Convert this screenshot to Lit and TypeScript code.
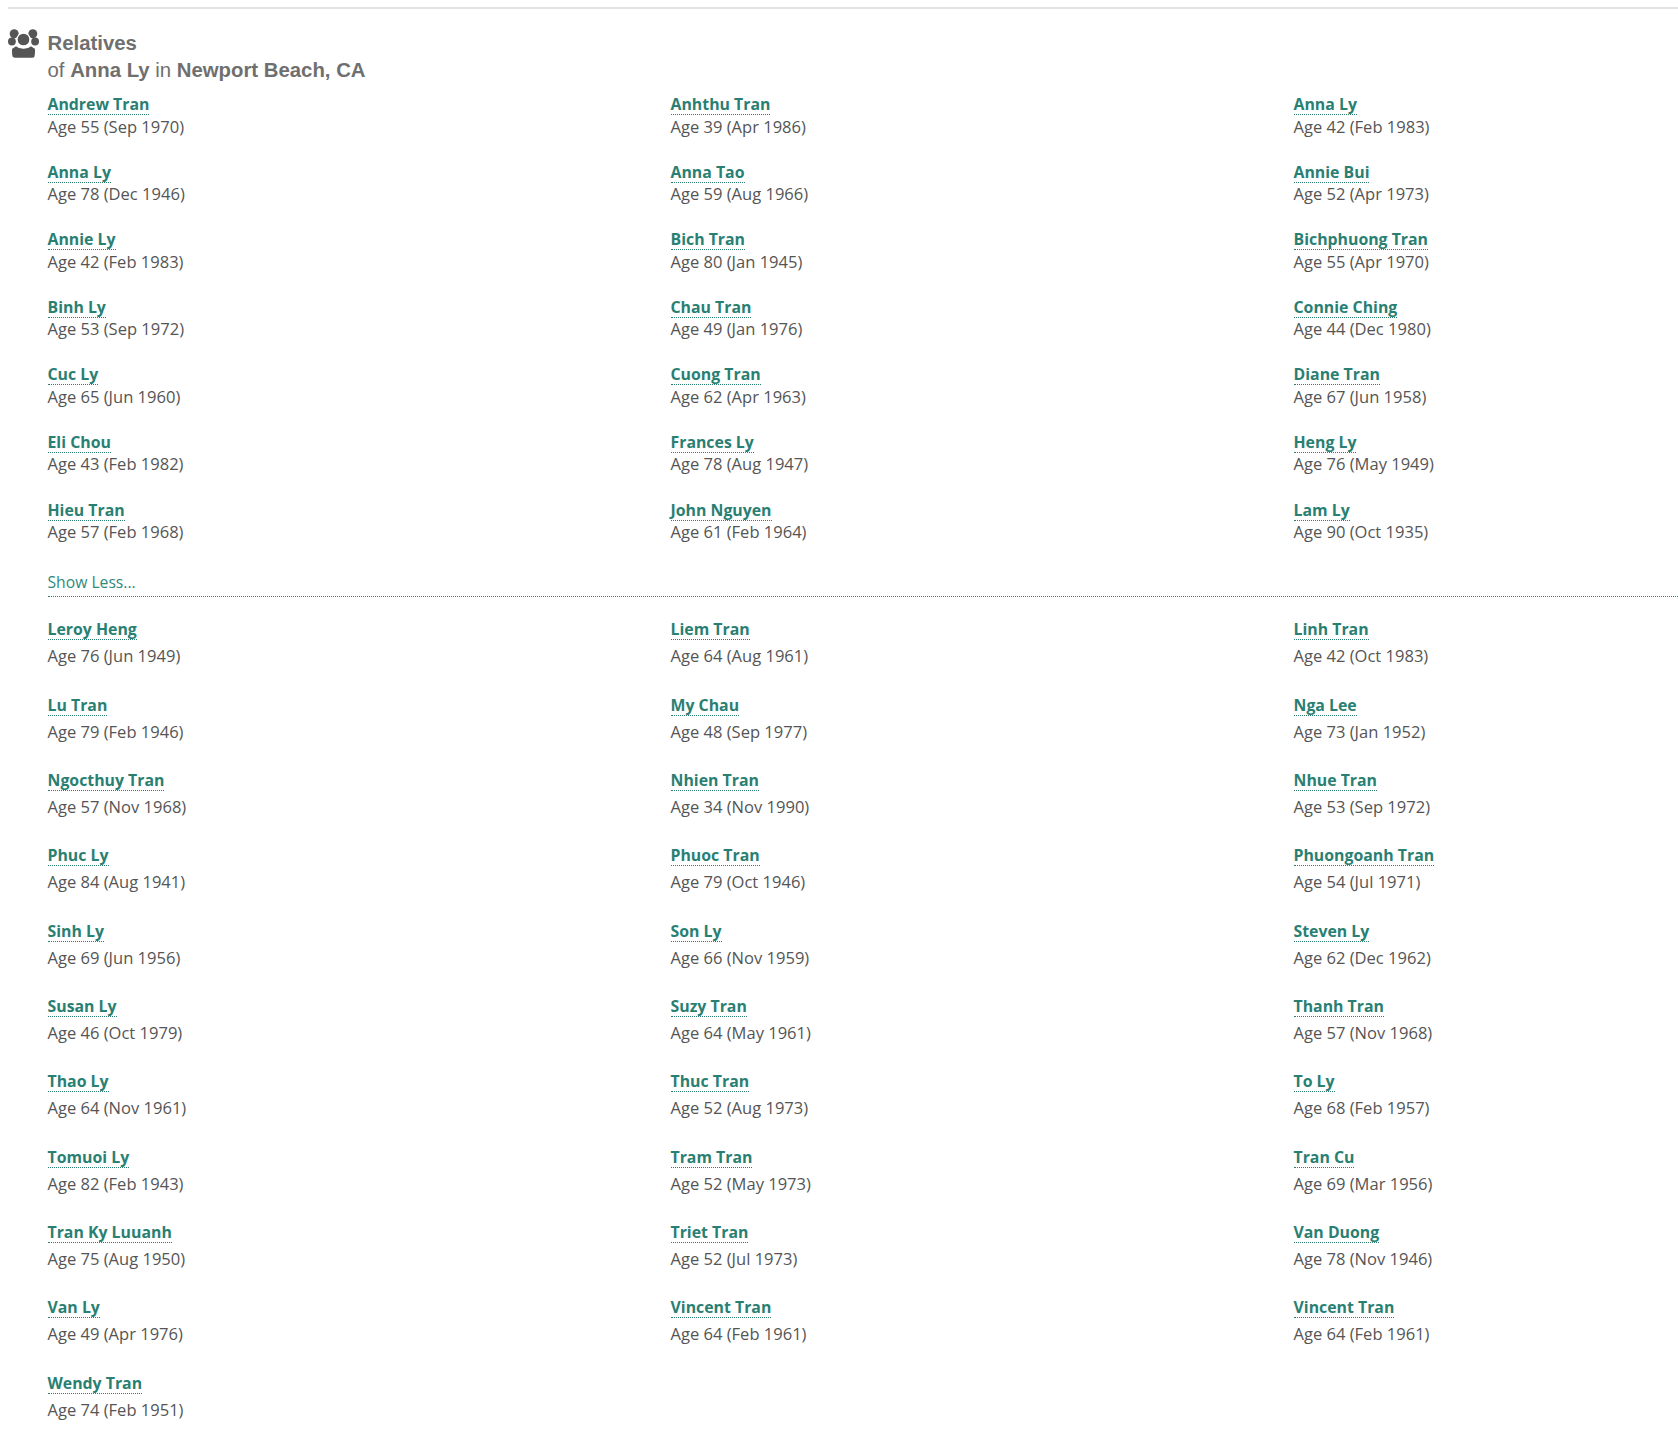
import { LitElement, html, css } from "lit";
import { customElement } from "lit/decorators.js";

const first = `Andrew Tran|Age 55 (Sep 1970);Anhthu Tran|Age 39 (Apr 1986);Anna Ly|Age 42 (Feb 1983);Anna Ly|Age 78 (Dec 1946);Anna Tao|Age 59 (Aug 1966);Annie Bui|Age 52 (Apr 1973);Annie Ly|Age 42 (Feb 1983);Bich Tran|Age 80 (Jan 1945);Bichphuong Tran|Age 55 (Apr 1970);Binh Ly|Age 53 (Sep 1972);Chau Tran|Age 49 (Jan 1976);Connie Ching|Age 44 (Dec 1980);Cuc Ly|Age 65 (Jun 1960);Cuong Tran|Age 62 (Apr 1963);Diane Tran|Age 67 (Jun 1958);Eli Chou|Age 43 (Feb 1982);Frances Ly|Age 78 (Aug 1947);Heng Ly|Age 76 (May 1949);Hieu Tran|Age 57 (Feb 1968);John Nguyen|Age 61 (Feb 1964);Lam Ly|Age 90 (Oct 1935)`;
const second = `Leroy Heng|Age 76 (Jun 1949);Liem Tran|Age 64 (Aug 1961);Linh Tran|Age 42 (Oct 1983);Lu Tran|Age 79 (Feb 1946);My Chau|Age 48 (Sep 1977);Nga Lee|Age 73 (Jan 1952);Ngocthuy Tran|Age 57 (Nov 1968);Nhien Tran|Age 34 (Nov 1990);Nhue Tran|Age 53 (Sep 1972);Phuc Ly|Age 84 (Aug 1941);Phuoc Tran|Age 79 (Oct 1946);Phuongoanh Tran|Age 54 (Jul 1971);Sinh Ly|Age 69 (Jun 1956);Son Ly|Age 66 (Nov 1959);Steven Ly|Age 62 (Dec 1962);Susan Ly|Age 46 (Oct 1979);Suzy Tran|Age 64 (May 1961);Thanh Tran|Age 57 (Nov 1968);Thao Ly|Age 64 (Nov 1961);Thuc Tran|Age 52 (Aug 1973);To Ly|Age 68 (Feb 1957);Tomuoi Ly|Age 82 (Feb 1943);Tram Tran|Age 52 (May 1973);Tran Cu|Age 69 (Mar 1956);Tran Ky Luuanh|Age 75 (Aug 1950);Triet Tran|Age 52 (Jul 1973);Van Duong|Age 78 (Nov 1946);Van Ly|Age 49 (Apr 1976);Vincent Tran|Age 64 (Feb 1961);Vincent Tran|Age 64 (Feb 1961);Wendy Tran|Age 74 (Feb 1951)`;
const parse = (s: string) => s.split(";").map((r) => r.split("|"));

@customElement("app-root")
export class AppRoot extends LitElement {
  static styles = css`
    :host { display: block; font-family: "Open Sans", "Noto Sans", sans-serif; color: #555; font-size: 16.55px; height: 1453px; overflow: hidden; }
    .top { margin-left: 8px; height: 0; border-top: 2px solid #e3e3e3; margin-top: 7px; }
    .head { display: flex; margin: 21px 0 0 8px; }
    .icon { width: 31px; height: 31px; margin: -1px 8.500px 0 0; flex: none; fill: #555; }
    .cut { stroke: #fff; stroke-width: 1.300; }
    .title { font-family: "Liberation Sans", Arial, sans-serif; font-size: 20.35px; line-height: 27px; color: #6f6f6f; font-weight: 400; }
    .title b { font-weight: 700; }
    .title div:first-child { font-weight: 700; }
    .body { margin-left: 47.5px; }
    .grid { display: grid; grid-template-columns: 623px 623px 1fr; }
    .g1 { margin-top: 8px; grid-auto-rows: 67.6px; }
    .g2 { margin-top: 20px; grid-auto-rows: 75.35px; }
    .name { display: inline-block; font-size: 15.85px; font-weight: 700; color: #2a7f73; line-height: 19px; border-bottom: 1px dotted #2a7f73; text-decoration: none; }
    .age { line-height: 22px; margin-top: 0.5px; }
    .g2 .age { margin-top: 5px; }
    .less { color: #2f8a7c; margin-top: 5.500px; line-height: 22px; font-size: 15.7px; }
    .rule { border-top: 1px dotted #2a7f73; margin-top: 3.500px; }
  `;
  private cell(r: string[]) {
    return html`<div><a class="name">${r[0]}</a><div class="age">${r[1]}</div></div>`;
  }
  render() {
    return html`
      <div class="top"></div>
      <div class="head">
        <svg class="icon" viewBox="0 0 31 31">
          <circle cx="6.200" cy="4.700" r="4.500"/><circle cx="24.800" cy="4.700" r="4.500"/>
          <circle cx="3.900" cy="12.500" r="3.900"/><circle cx="27.100" cy="12.500" r="3.900"/>
          <path class="cut" d="M3.500 19.500 8 16.500c2 1.800 4.500 2.700 7.500 2.700s5.500-.9 7.500-2.700l4.500 3c.5 3 .3 5.500-.3 8-.3 1.300-1.500 2-3.200 2H7c-1.700 0-2.900-.7-3.200-2-.6-2.500-.8-5-.3-8z"/>
          <circle class="cut" cx="15.500" cy="10.500" r="6.500"/>
        </svg>
        <div class="title"><div>Relatives</div><div>of <b>Anna Ly</b> in <b>Newport Beach, CA</b></div></div>
      </div>
      <div class="body">
        <div class="grid g1">${parse(first).map((r) => this.cell(r))}</div>
        <div class="less">Show Less...</div>
        <div class="rule"></div>
        <div class="grid g2">${parse(second).map((r) => this.cell(r))}</div>
      </div>`;
  }
}
